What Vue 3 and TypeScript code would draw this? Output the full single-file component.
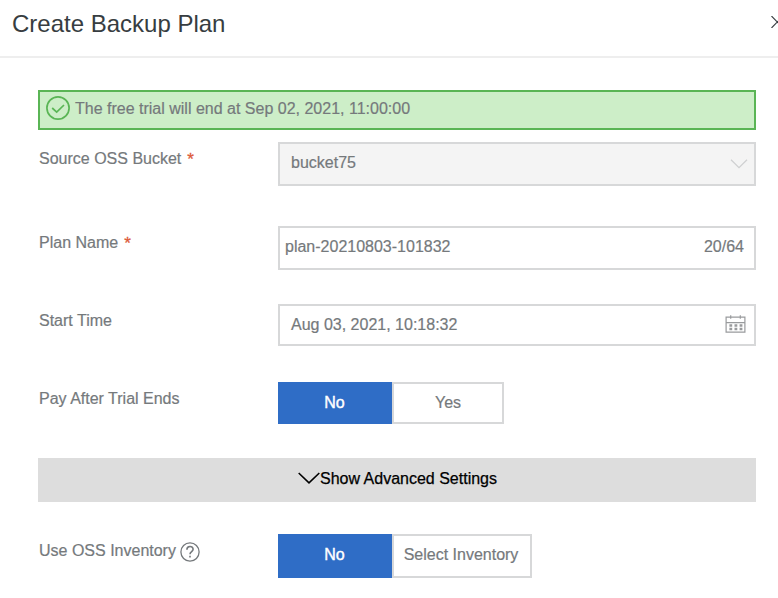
<script setup lang="ts">
import { ref } from 'vue'

const bucket = ref('bucket75')
const planName = ref('plan-20210803-101832')
const startTime = ref('Aug 03, 2021, 10:18:32')
const payAfterTrial = ref(false)
const useInventory = ref(false)
const maxLength = 64
</script>

<template>
  <section class="dialog">
    <header class="header">
      <h1 class="title">Create Backup Plan</h1>
      <svg class="close" width="12" height="12" viewBox="0 0 12 12">
        <path d="M0.5 0 L12 12 M0.5 12 L12 0" />
      </svg>
    </header>

    <main class="body">
      <div class="notice">
        <svg class="notice-icon" width="24" height="24" viewBox="0 0 24 24">
          <circle cx="12" cy="12" r="11.1" />
          <path d="M6.2 12 L10.7 16.1 L18 9" />
        </svg>
        <span class="notice-text">The free trial will end at Sep 02, 2021, 11:00:00</span>
      </div>

      <div class="row row-bucket">
        <div class="label"><span>Source OSS Bucket</span><span class="required">*</span></div>
        <div class="field disabled">
          <span class="value">{{ bucket }}</span>
          <svg class="arrow" width="18" height="10" viewBox="0 0 18 10">
            <path d="M1 0.8 L9 8.6 L17 0.8" />
          </svg>
        </div>
      </div>

      <div class="row row-name">
        <div class="label"><span>Plan Name</span><span class="required">*</span></div>
        <div class="field name-field">
          <span class="value">{{ planName }}</span>
          <span class="count">{{ planName.length }}/{{ maxLength }}</span>
        </div>
      </div>

      <div class="row row-time">
        <div class="label"><span>Start Time</span></div>
        <div class="field short">
          <span class="value">{{ startTime }}</span>
          <svg class="calendar" width="21" height="18" viewBox="0 0 21 18">
            <path d="M1.1 2.2 H19.9 V17.1 H1.1 Z M1.1 7.7 H19.9" />
            <path d="M5.7 0.3 V3.8 M15.3 0.3 V3.8" />
            <path class="dots" d="M4.4 10.4 H17.4 M4.4 13.9 H17.4" />
          </svg>
        </div>
      </div>

      <div class="row row-pay">
        <div class="label"><span>Pay After Trial Ends</span></div>
        <div class="toggle short">
          <button :class="['option', { active: !payAfterTrial }]" @click="payAfterTrial = false">No</button>
          <button :class="['option', 'yes', { active: payAfterTrial }]" @click="payAfterTrial = true">Yes</button>
        </div>
      </div>

      <div class="advanced">
        <svg class="advanced-icon" width="22" height="12" viewBox="0 0 22 12">
          <path d="M0.7 1 L11 10.8 L21.3 1" />
        </svg>
        <span class="advanced-text">Show Advanced Settings</span>
      </div>

      <div class="row row-inventory">
        <div class="label">
          <span>Use OSS Inventory</span>
          <svg class="help" width="20" height="20" viewBox="0 0 20 20">
            <circle cx="10" cy="10" r="9.1" />
            <path class="mark" d="M6.9 7.8 C6.9 3.4 13.1 3.6 13.1 7.3 C13.1 9.6 10 9.6 10 12.3" />
            <path class="mark" d="M10 13.8 V15.6" />
          </svg>
        </div>
        <div class="toggle">
          <button :class="['option', { active: !useInventory }]" @click="useInventory = false">No</button>
          <button :class="['option', 'inventory', { active: useInventory }]" @click="useInventory = true">Select Inventory</button>
        </div>
      </div>
    </main>
  </section>
</template>

<style>
body {
  margin: 0;
  overflow: hidden;
  background: #fff;
}
</style>

<style scoped>
.dialog {
  width: 100%;
  height: 598px;
  box-sizing: border-box;
  overflow: hidden;
  background: #fff;
  color: #75797c;
  font-family: "Liberation Sans", Arial, sans-serif;
  font-size: 16px;
  line-height: 20px;
  -webkit-text-stroke: 0.2px currentColor;
}
svg {
  flex: none;
  fill: none;
  stroke: currentColor;
}
.header {
  display: flex;
  justify-content: space-between;
  height: 56px;
  border-bottom: 2px solid #eee;
  padding-left: 12px;
}
.title {
  margin: 8px 0 0;
  color: #373d41;
  font-size: 24px;
  font-weight: 400;
  line-height: 32px;
  -webkit-text-stroke: 0;
}
.close {
  margin: 16px -5px 0 0;
  color: #373d41;
  stroke-width: 1.1;
}
.body {
  padding: 32px 22px 0 38px;
}
.notice {
  display: flex;
  box-sizing: border-box;
  height: 40px;
  padding: 4px 6px;
  border: 2px solid #5ab555;
  background: #cdeec8;
}
.notice-icon {
  color: #5ab555;
  stroke-width: 1.7;
}
.notice-text {
  margin: 3px 0 0 5px;
}
.row {
  display: flex;
}
.row-bucket { margin-top: 12px; }
.row-name { margin-top: 40px; }
.row-time { margin-top: 34px; }
.row-pay { margin-top: 36px; }
.row-inventory { margin-top: 32px; }
.label {
  display: flex;
  flex: none;
  box-sizing: border-box;
  width: 240px;
  padding: 7px 0 0 1px;
  white-space: nowrap;
}
.required {
  margin: 1px 0 0 6px;
  color: #dd5a3a;
  font-size: 17px;
  -webkit-text-stroke: 0.3px currentColor;
}
.field {
  display: flex;
  flex: 1;
  justify-content: space-between;
  box-sizing: border-box;
  height: 44px;
  padding: 9px 10px 0 11px;
  border: 2px solid #d7d8d9;
}
.short {
  height: 42px;
}
.disabled {
  padding-right: 6px;
  background: #f4f4f4;
}
.name-field {
  padding-left: 5px;
}
.arrow {
  margin-top: 6px;
  color: #cfd0d1;
  stroke-width: 1.3;
}
.calendar {
  margin: 0 -2px 0 0;
  color: #999b9d;
  stroke-width: 1.2;
}
.dots {
  stroke-width: 2.5;
  stroke-dasharray: 2.8 2.3;
}
.toggle {
  display: flex;
  height: 44px;
}
.toggle.short {
  height: 42px;
}
.option {
  box-sizing: border-box;
  width: 114px;
  height: 100%;
  margin: 0;
  padding: 0 1px 2px 0;
  border: 2px solid #d7d8d9;
  border-radius: 0;
  background: #fff;
  color: inherit;
  font: inherit;
  white-space: nowrap;
}
.short .option {
  padding-bottom: 0;
}
.option.active {
  border-color: #2f6dc6;
  background: #2f6dc6;
  color: #fff;
  -webkit-text-stroke: 0.4px #fff;
}
.option.yes {
  width: 112px;
  padding-right: 0;
}
.option.inventory {
  width: 140px;
  padding-right: 2px;
}
.advanced {
  display: flex;
  justify-content: center;
  box-sizing: border-box;
  height: 44px;
  margin-top: 34px;
  padding: 11px 0 0 1px;
  background: #ddd;
  color: #000;
}
.advanced-icon {
  margin-top: 3px;
  stroke-width: 1.6;
}
.advanced-text {
  -webkit-text-stroke: 0.25px #000;
}
.help {
  margin: 1px 0 0 4px;
  stroke-width: 1.3;
}
.mark {
  stroke-width: 1.6;
}
</style>
